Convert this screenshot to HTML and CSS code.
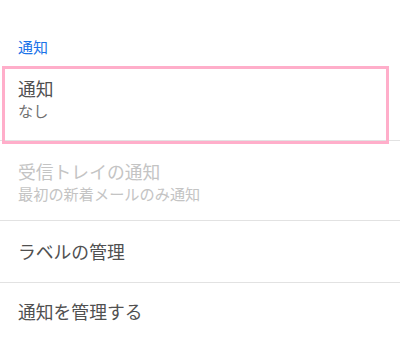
FILE: index.html
```html
<!DOCTYPE html>
<html lang="ja">
<head>
<meta charset="utf-8">
<link rel="stylesheet" href="styles.css">
</head>
<body>
<div class="page">
  <div class="section-header">通知</div>
  <div class="list">
    <div class="item two-line first">
      <div class="title">通知</div>
      <div class="subtitle">なし</div>
    </div>
    <div class="item two-line disabled">
      <div class="title">受信トレイの通知</div>
      <div class="subtitle">最初の新着メールのみ通知</div>
    </div>
    <div class="item one-line">
      <div class="title">ラベルの管理</div>
    </div>
    <div class="item one-line last">
      <div class="title">通知を管理する</div>
    </div>
  </div>
  <div class="highlight"></div>
</div>
</body>
</html>
```
FILE: styles.css
```css
html, body {
  margin: 0;
  padding: 0;
  background: #ffffff;
}
body {
  font-family: "Noto Sans CJK JP", "Noto Sans", sans-serif;
  width: 400px;
  height: 360px;
  overflow: hidden;
}
.page {
  position: relative;
  width: 400px;
  height: 360px;
}
.section-header {
  padding: 37px 18px 0;
  height: 21px;
  font-size: 15px;
  line-height: 20px;
  color: #1a73e8;
}
.list {
  display: flex;
  flex-direction: column;
}
.item {
  padding: 18px 18px 0;
  border-bottom: 1px solid #e2e2e2;
}
.item.two-line {
  padding-bottom: 17px;
}
.item.two-line.first {
  padding-bottom: 20px;
}
.item.one-line {
  padding-top: 18px;
  padding-bottom: 19px;
}
.item.last {
  padding-top: 16px;
  border-bottom: none;
}
.title {
  font-size: 17.8px;
  line-height: 24px;
  color: #505050;
}
.subtitle {
  font-size: 15.2px;
  line-height: 20px;
  color: #707070;
}
.disabled .title,
.disabled .subtitle {
  color: #c4c4c4;
}
.highlight {
  position: absolute;
  left: 2px;
  top: 66px;
  width: 381px;
  height: 72px;
  border: 3px solid #ffaeca;
  pointer-events: none;
}
```
